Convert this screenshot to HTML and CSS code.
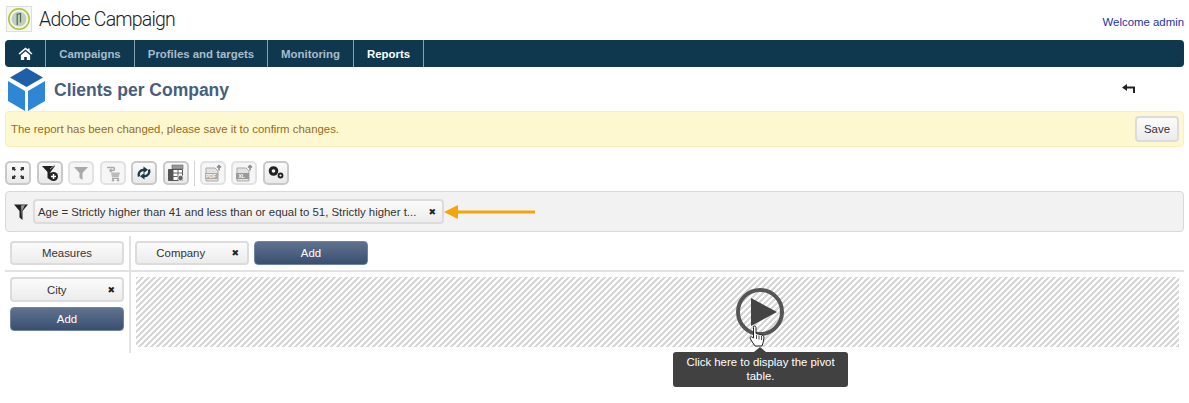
FILE: index.html
```html
<!DOCTYPE html>
<html lang="en">
<head>
<meta charset="utf-8">
<title>Clients per Company</title>
<link rel="stylesheet" href="styles.css">
</head>
<body>
<header class="top">
  <div class="brand">
    <svg class="logo" viewBox="0 0 26 26" width="26" height="26"><rect x="0.5" y="0.5" width="25" height="25" fill="#f6f6f3" stroke="#dedede"/><circle cx="13" cy="13" r="10.200" fill="#f2f4e8" stroke="#a9c23f" stroke-width="1.500"/><circle cx="13" cy="13" r="7.500" fill="#c2cfc0"/><path d="M11.200 7.500v11.500M14.500 7v9.500M11.200 8.500c2 -1 3.300 -1 3.300 0" stroke="#3f6b4f" stroke-width="1.200" fill="none"/></svg>
    <span class="brand-name">Adobe Campaign</span>
  </div>
  <a class="welcome">Welcome admin</a>
</header>
<nav class="nav">
  <span class="nav-item home"><svg viewBox="0 0 16 14" width="15" height="13"><path d="M8 0.500L0.500 7l1.200 1.200L8 2.800l6.300 5.400L15.500 7 12.500 4.400V1.500h-2v1.200zM3 9v5h3.600v-3.300h2.800V14H13V9L8 4.700z" fill="#fff"/></svg></span>
  <span class="nav-item">Campaigns</span>
  <span class="nav-item">Profiles and targets</span>
  <span class="nav-item">Monitoring</span>
  <span class="nav-item active">Reports</span>
</nav>
<div class="title-row">
  <svg class="cube" viewBox="0 0 38 43" width="38" height="43"><path d="M18.500 0L35 9.500 18.500 19 2 9.500z" fill="#1f5fa8"/><path d="M0 13L17 23V43L0 33z" fill="#2f86d4"/><path d="M37 13L20 23V43L37 33z" fill="#2f86d4"/></svg>
  <h1 class="title">Clients per Company</h1>
  <svg class="back" viewBox="0 0 13 9" width="13" height="9"><path d="M0 3.500L5 0v2.500h8V9h-2V4.500H5V7z" fill="#222"/></svg>
</div>
<div class="notice">
  <span>The report has been changed, please save it to confirm changes.</span>
  <button class="btn save">Save</button>
</div>
<div class="toolbar">
  <button class="tool"><svg viewBox="0 0 16 16" width="16" height="16"><path d="M2 2h3.500L4.500 3 6 4.500 4.500 6 3 4.500 2 5.500zM14 2v3.500L13 4.500 11.500 6 10 4.500 11.500 3 10.500 2zM2 14v-3.500L3 11.500 4.500 10 6 11.500 4.500 13 5.500 14zM14 14h-3.500L11.500 13 10 11.500 11.500 10 13 11.500 14 10.500z" fill="#333"/></svg></button>
  <button class="tool"><svg viewBox="0 0 18 18" width="18" height="18"><path d="M1 2h13L9.500 8v8L6.500 14V8z" fill="#222"/><path d="M9 5l5-4" stroke="#aaa" stroke-width="1"/><circle cx="12.500" cy="12.500" r="4.500" fill="#222"/><path d="M10 12.500h5M12.500 10v5" stroke="#fff" stroke-width="1.500"/></svg></button>
  <button class="tool off"><svg viewBox="0 0 16 16" width="16" height="16"><path d="M1 2h14L9.500 8v7L6.500 13V8z" fill="#aaa"/></svg></button>
  <button class="tool off"><svg viewBox="0 0 18 18" width="18" height="18"><path d="M3 3.500h6c2 0 2 3 0 3H5.500M5.500 6.500l2-1.500M5.500 6.500l2 1.500" fill="none" stroke="#aaa" stroke-width="1.500"/><path d="M7 8.500h9l-1.500 5H8z" fill="#bbb"/><path d="M8 14.500h7" stroke="#aaa"/><circle cx="9" cy="16.300" r="1.200" fill="#aaa"/><circle cx="14" cy="16.300" r="1.200" fill="#aaa"/></svg></button>
  <button class="tool"><svg viewBox="0 0 18 18" width="18" height="18"><path d="M4 12.500C2.800 9 5 5.800 9 5.800" fill="none" stroke="#1d3a4a" stroke-width="2.400"/><path d="M8.500 2.500L13 5.800 8.500 9.200z" fill="#1d3a4a"/><path d="M14 5.500C15.200 9 13 12.200 9 12.200" fill="none" stroke="#1d3a4a" stroke-width="2.400"/><path d="M9.500 8.800L5 12.200l4.500 3.300z" fill="#1d3a4a"/></svg></button>
  <button class="tool"><svg viewBox="0 0 18 18" width="18" height="18"><rect x="5" y="1" width="11" height="4" fill="#999" stroke="#666" stroke-width=".6"/><path d="M1.500 5.500h14v11h-14z" fill="#fff" stroke="#555"/><path d="M1.500 9h14M1.500 12.500h14M6 5.500v11M11 5.500v11" stroke="#666"/><rect x="1.500" y="5.500" width="4.500" height="11" fill="#555"/><circle cx="13.500" cy="14" r="2.800" fill="#666" stroke="#fff" stroke-width=".8"/></svg></button>
  <span class="sep"></span>
  <button class="tool off"><svg viewBox="0 0 18 18" width="18" height="18"><path d="M2 4h9l3 3v10H2z" fill="#e2e2e2" stroke="#aaa"/><path d="M15 6.500V1.500M13 3.500l2-2 2 2" fill="none" stroke="#888" stroke-width="1.500"/><rect x="1" y="9" width="13" height="6" fill="#aaa"/><text x="2" y="14.200" class="mini">PDF</text></svg></button>
  <button class="tool off"><svg viewBox="0 0 18 18" width="18" height="18"><path d="M2 4h9l3 3v10H2z" fill="#e2e2e2" stroke="#aaa"/><path d="M15 6.500V1.500M13 3.500l2-2 2 2" fill="none" stroke="#888" stroke-width="1.500"/><rect x="1" y="9" width="13" height="6" fill="#999"/><text x="3.500" y="14.200" class="mini">XL</text></svg></button>
  <button class="tool"><svg viewBox="0 0 18 18" width="18" height="18"><circle cx="6.500" cy="7" r="3.300" fill="none" stroke="#222" stroke-width="3"/><circle cx="13.500" cy="11.500" r="2" fill="none" stroke="#222" stroke-width="1.800"/></svg></button>
</div>
<div class="filter-bar">
  <svg class="funnel" viewBox="0 0 14 16" width="14" height="16"><path d="M0 0.500h14L8.500 7v9L5.500 13.500V7z" fill="#222"/><path d="M7 1.500L11 1 8 7v8z" fill="#999"/></svg>
  <span class="chip filter-chip"><span class="filter-text">Age = Strictly higher than 41 and less than or equal to 51, Strictly higher t...</span><span class="x">✖</span></span>
  <svg class="arrow" viewBox="0 0 92 16" width="92" height="16"><path d="M0 8L14 1V6.500H91V9.500H14V15z" fill="#f5a50c"/></svg>
</div>
<div class="pivot">
  <div class="row-top">
    <div class="corner"><button class="btn wide">Measures</button></div>
    <div class="cols">
      <span class="chip col-chip"><span class="grow">Company</span><span class="x">✖</span></span>
      <button class="add wide">Add</button>
    </div>
  </div>
  <div class="row-bottom">
    <div class="side">
      <span class="chip side-chip"><span class="grow">City</span><span class="x">✖</span></span>
      <button class="add side-add">Add</button>
    </div>
    <div class="stage">
      <div class="hatch">
        <svg class="play" viewBox="0 0 48 48" width="48" height="48"><circle cx="24" cy="24" r="22" fill="none" stroke="#555" stroke-width="4"/><path d="M15 10L41 24 15 38z" fill="#444"/></svg>
      </div>
      <div class="tip">Click here to display the pivot table.</div>
      <svg class="cursor" viewBox="0 0 16 22" width="16" height="22"><path d="M4.500 1.500c1 -1 2.500 0 2.500 1v6l6 1.500c1.500 .5 2 1.500 2 3l-1 5-1 3H6l-4-6-1-2c0-1 1-1.500 2-1l1.500 1V2.500z" fill="#fff" stroke="#222" stroke-width="1"/><path d="M7.500 10v4M10 10.500v4M12.500 11v4" stroke="#222" stroke-width=".8"/></svg>
    </div>
  </div>
</div>
</body>
</html>
```
FILE: styles.css
```css
* { box-sizing: border-box; }
html, body { margin: 0; padding: 0; }
body { width: 1189px; height: 403px; overflow: hidden; background: #fff; font-family: "Liberation Sans", Arial, sans-serif; font-size: 11.4px; color: #333; }
button { font-family: inherit; margin: 0; padding: 0; }

.top { height: 40px; display: flex; justify-content: space-between; padding: 6px 5px 0 6px; }
.brand { display: flex; align-items: center; gap: 7px; height: 26px; }
.logo { flex: none; }
.brand-name { font-family: "Roboto", sans-serif; font-weight: 300; font-size: 19.500px; letter-spacing: -0.8px; color: #222; }
.welcome { font-size: 11.4px; color: #1d2fa8; margin-top: 10px; }

.nav { margin: 0 5px; height: 27px; background: #0f384f; border-radius: 4px; display: flex; align-items: stretch; }
.nav-item { display: flex; align-items: center; justify-content: center; font-size: 11.4px; font-weight: bold; color: #a9bcc9; border-right: 1px solid #8aa0ae; }
.nav-item:nth-child(1) { width: 41px; }
.nav-item:nth-child(2) { width: 89px; }
.nav-item:nth-child(3) { width: 133px; }
.nav-item:nth-child(4) { width: 86px; }
.nav-item:nth-child(5) { width: 70px; }
.nav-item.active { color: #fff; }

.title-row { height: 44px; display: flex; align-items: flex-end; padding: 0 0 0 8px; }
.cube { flex: none; }
.title { font-size: 17.5px; font-weight: bold; color: #475e7c; margin: 0 0 11px 8px; line-height: 20px; }
.back { margin-left: auto; margin-right: 54px; margin-bottom: 18px; }

.notice { margin: 0 5px; height: 36px; background: #fdf8d0; border: 1px solid #faf0b8; border-radius: 4px; display: flex; align-items: center; justify-content: space-between; padding: 0 4px 0 5px; color: #9a6a1c; font-size: 11.4px; }
.btn { border: 2px solid #dcdcdc; border-radius: 4px; background: linear-gradient(#fbfbfb, #ececec); color: #333; font-size: 11.4px; }
.save { width: 44px; height: 26px; }

.toolbar { height: 44px; display: flex; align-items: flex-start; gap: 5.500px; padding: 14px 0 0 5px; }
.tool { width: 26px; height: 24px; border: 2px solid #c9c9c9; border-radius: 5px; background: linear-gradient(#fafafa, #e9e9e9); display: flex; align-items: center; justify-content: center; }
.tool.off { border-color: #e2e2e2; background: #f6f6f6; }
.sep { width: 1px; height: 25px; background: #d5d5d5; margin-right: -1px; }
.mini { font-size: 5px; font-weight: bold; fill: #fff; }

.filter-bar { margin: 0 5px; height: 41px; background: #f2f2f2; border: 1px solid #d9d9d9; border-radius: 4px; display: flex; align-items: center; padding-left: 8px; }
.funnel { flex: none; margin-right: 5px; }
.chip { display: inline-flex; align-items: center; background: linear-gradient(#fbfbfb, #ececec); border: 2px solid #dcdcdc; border-radius: 4px; color: #333; font-size: 11.4px; }
.filter-chip { width: 411px; height: 25px; justify-content: space-between; padding: 0 6px 0 3px; flex: none; }
.filter-text { white-space: nowrap; }
.x { font-size: 9px; color: #222; font-family: "DejaVu Sans", sans-serif; }
.grow { flex: 1; text-align: center; }
.arrow { flex: none; }

.pivot { margin: 4px 5px 0; }
.row-top { height: 36px; display: flex; border-bottom: 2px solid #e2e2e2; }
.corner { width: 126px; padding: 5px 0 0 5px; border-right: 2px solid #e2e2e2; height: 36px; }
.corner .btn { width: 114px; height: 24px; }
.cols { display: flex; gap: 5px; padding: 5px 0 0 4px; }
.col-chip { width: 114px; height: 24px; padding: 0 8px 0 0; }
.col-chip .grow { padding-right: 7px; }
.add { border: 1px solid #6f84a3; border-radius: 4px; background: linear-gradient(#5f7390, #3a4f70); color: #fff; font-size: 11.4px; }
.cols .add { width: 114px; height: 24px; }
.row-bottom { display: flex; height: 81px; }
.side { width: 126px; padding: 5px 0 0 5px; border-right: 2px solid #e2e2e2; display: flex; flex-direction: column; gap: 5px; }
.side-chip { width: 114px; height: 25px; padding: 0 7px 0 0; flex: none; }
.side-chip .grow { padding-right: 6px; }
.side-add { width: 114px; height: 24px; flex: none; }
.stage { flex: 1; padding: 5px 5px 0 5px; position: relative; }
.hatch { height: 70px; background-color: #fff; background-image: linear-gradient(135deg, #d6d6d6 25%, #fff 25%, #fff 50%, #d6d6d6 50%, #d6d6d6 75%, #fff 75%); background-size: 6px 6px; position: relative; }
.play { position: absolute; left: 600px; top: 11px; }
.cursor { position: absolute; left: 618px; top: 53px; }
.tip { position: absolute; left: 542px; top: 80px; width: 175px; height: 35px; background: #414141; border-radius: 3px; color: #fff; font-size: 11.4px; line-height: 14px; text-align: center; padding: 3px 8px 0; }
.tip::before { content: ""; position: absolute; left: 81px; top: -5px; border-left: 6px solid transparent; border-right: 6px solid transparent; border-bottom: 5px solid #414141; }
```
